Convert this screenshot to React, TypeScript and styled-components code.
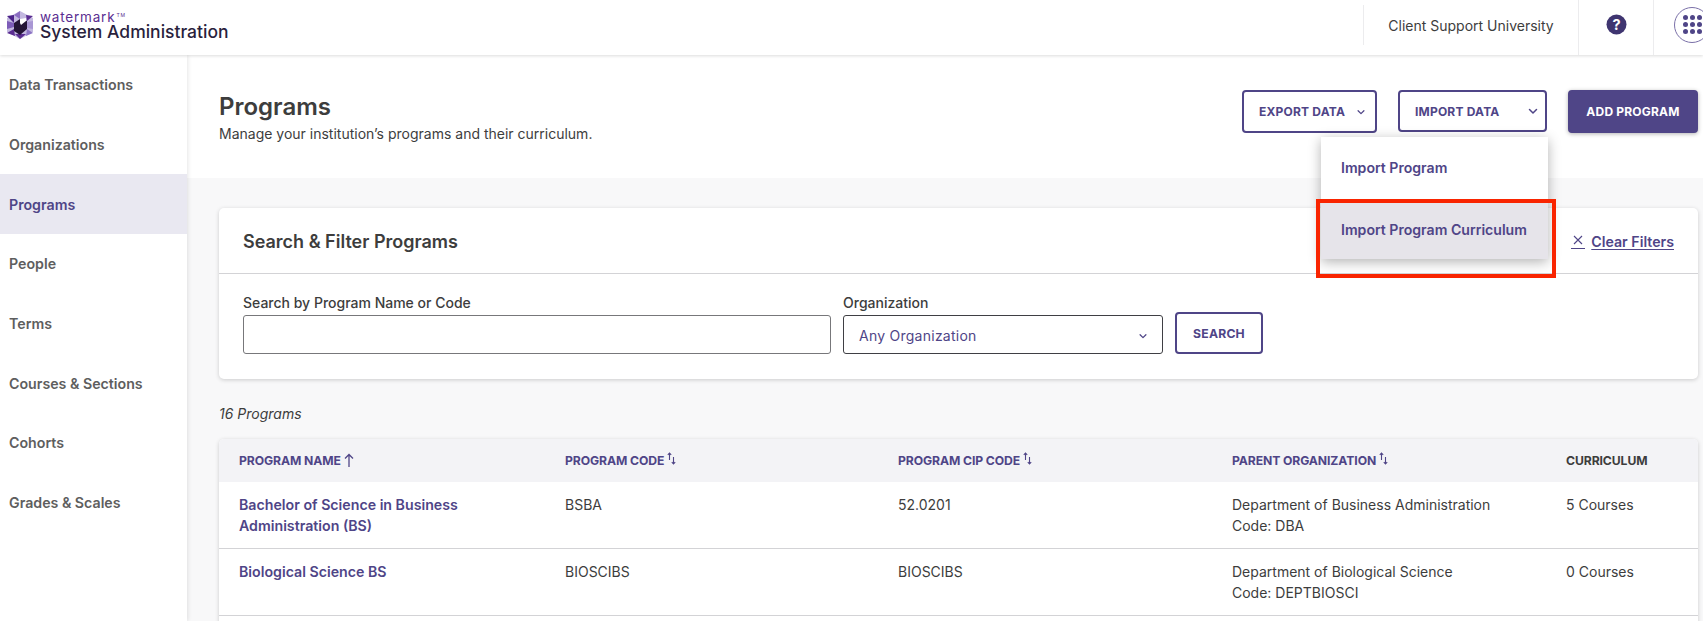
import React from "react";
import styled, { createGlobalStyle } from "styled-components";

const PURPLE = "#4f4587";
const TEXT = "#3d3d3d";

const GlobalStyle = createGlobalStyle`
  html, body {
    margin: 0;
    padding: 0;
    background: #ffffff;
  }
  body {
    font-family: Inter, "Noto Sans", "Liberation Sans", sans-serif;
    color: ${TEXT};
  }
  * {
    box-sizing: border-box;
  }
`;

const Page = styled.div`
  position: relative;
  width: 1703px;
  height: 621px;
  overflow: hidden;
  display: flex;
  flex-direction: column;
  background: #f8f8f9;
`;

const TopBar = styled.header`
  position: relative;
  z-index: 3;
  flex: 0 0 55px;
  display: flex;
  align-items: stretch;
  background: #ffffff;
  box-shadow: 0 1px 3px rgba(0, 0, 0, 0.14);
`;

const Brand = styled.div`
  display: flex;
  align-items: center;
  gap: 7px;
  padding: 0 0 5px 7px;
  flex: 1;
`;

const BrandText = styled.div`
  display: flex;
  flex-direction: column;
`;

const BrandMark = styled.span`
  padding-top: 2px;
  font-size: 13.5px;
  line-height: 12px;
  letter-spacing: 0.8px;
  color: #5a2d91;
  sup {
    font-size: 5px;
    vertical-align: 5px;
    line-height: 0;
    margin-left: 1px;
  }
`;

const BrandTitle = styled.span`
  font-size: 17.5px;
  line-height: 18px;
  font-weight: 500;
  color: #2a1f3d;
`;

const TopCell = styled.div<{ $width: number; $tall?: boolean }>`
  flex: 0 0 ${({ $width }) => $width}px;
  min-width: 0;
  display: flex;
  align-items: center;
  justify-content: center;
  border-left: 1px solid #ececee;
  margin-top: ${({ $tall }) => ($tall ? 0 : 5)}px;
  margin-bottom: ${({ $tall }) => ($tall ? 0 : 10)}px;
  padding-bottom: ${({ $tall }) => ($tall ? 6 : 0)}px;
`;

const SchoolName = styled.span`
  font-size: 14px;
  color: ${TEXT};
`;

const AppsCell = styled(TopCell)`
  justify-content: flex-start;
  padding-left: 20px;
`;

const AppsButton = styled.div`
  flex: 0 0 36px;
  width: 36px;
  height: 36px;
  border: 1px solid #7a70a8;
  border-radius: 50%;
  display: grid;
  grid-template-columns: repeat(3, 5px);
  grid-auto-rows: 5px;
  gap: 2px;
  place-content: center;
`;

const AppsDot = styled.i`
  display: block;
  border-radius: 50%;
  background: ${PURPLE};
`;

const Body = styled.div`
  flex: 1;
  display: flex;
  min-height: 0;
`;

const SideNav = styled.nav`
  position: relative;
  z-index: 2;
  flex: 0 0 187px;
  background: #ffffff;
  box-shadow: 1px 0 4px rgba(0, 0, 0, 0.1);
`;

const NavItem = styled.div<{ $active?: boolean }>`
  height: 59.7px;
  display: flex;
  align-items: center;
  padding-left: 9px;
  font-size: 14.2px;
  font-weight: 600;
  color: ${({ $active }) => ($active ? PURPLE : "#5e5e5e")};
  background: ${({ $active }) => ($active ? "#e9e8f1" : "transparent")};
`;

const Main = styled.main`
  flex: 1;
  min-width: 0;
  display: flex;
  flex-direction: column;
`;

const PageHead = styled.section`
  flex: 0 0 123px;
  background: #ffffff;
  display: flex;
  justify-content: space-between;
  padding: 35px 5px 0 32px;
`;

const PageHeadText = styled.div`
  padding-top: 2px;
`;

const PageTitle = styled.h1`
  margin: 0 0 2px;
  font-size: 24px;
  line-height: 30px;
  font-weight: 600;
  color: ${TEXT};
`;

const PageSub = styled.p`
  margin: 0;
  font-size: 14px;
  line-height: 20px;
  color: ${TEXT};
`;

const Actions = styled.div`
  display: flex;
  gap: 21px;
  align-items: flex-start;
`;

const Button = styled.div<{ $width: number; $height?: number }>`
  width: ${({ $width }) => $width}px;
  height: ${({ $height }) => $height ?? 43}px;
  display: flex;
  align-items: center;
  justify-content: center;
  border: 2px solid ${PURPLE};
  border-radius: 4px;
  font-size: 12px;
  font-weight: 700;
  letter-spacing: 0.2px;
  color: ${PURPLE};
  background: #ffffff;
`;

const MenuButton = styled(Button)<{ $right: number }>`
  justify-content: space-between;
  padding: 0 ${({ $right }) => $right}px 0 15px;
`;

const PrimaryButton = styled(Button)`
  color: #ffffff;
  background: ${PURPLE};
  box-shadow: 0 1px 4px rgba(0, 0, 0, 0.3);
`;

const Content = styled.div`
  flex: 1;
  padding: 30px 5px 0 32px;
  min-height: 0;
`;

const Card = styled.section`
  background: #ffffff;
  border-radius: 5px;
  box-shadow: 0 1px 4px rgba(0, 0, 0, 0.18);
`;

const CardHead = styled.div`
  height: 66px;
  display: flex;
  align-items: center;
  justify-content: space-between;
  padding: 2px 24px 0;
  border-bottom: 1px solid #d3d3d6;
`;

const CardTitle = styled.h2`
  margin: 0;
  font-size: 18px;
  font-weight: 600;
  color: ${TEXT};
`;

const ClearFilters = styled.div`
  display: flex;
  align-items: center;
  gap: 6px;
  font-size: 14.2px;
  font-weight: 600;
  color: ${PURPLE};
  span {
    text-decoration: underline;
    text-underline-offset: 2px;
  }
`;

const ClearIcon = styled.div`
  display: flex;
  border-bottom: 1px solid ${PURPLE};
  padding: 0 1px 2px;
`;

const FilterRow = styled.div`
  display: flex;
  align-items: flex-end;
  gap: 12px;
  padding: 20px 24px 25px;
`;

const Field = styled.label<{ $width: number }>`
  flex: 0 0 ${({ $width }) => $width}px;
  display: flex;
  flex-direction: column;
  gap: 3px;
  font-size: 14px;
  font-weight: 500;
  line-height: 18px;
  color: ${TEXT};
`;

const TextInput = styled.div`
  height: 39px;
  border: 1px solid #77777a;
  border-radius: 3px;
  background: #ffffff;
`;

const SelectBox = styled.div`
  height: 39px;
  border: 1px solid #3f3f44;
  border-radius: 3px;
  background: #ffffff;
  display: flex;
  align-items: center;
  justify-content: space-between;
  padding: 2px 14px 0 15px;
  font-size: 14px;
  font-weight: 400;
  letter-spacing: 0.25px;
  color: ${PURPLE};
`;

const SearchButton = styled(Button)`
  font-size: 12.2px;
`;

const ResultCount = styled.div`
  margin: 26px 0 16px;
  font-size: 14px;
  line-height: 18px;
  font-style: italic;
  color: ${TEXT};
`;

const TableCard = styled(Card)`
  overflow: hidden;
`;

const TableRow = styled.div`
  display: grid;
  grid-template-columns: 326px 333px 334px 334px 1fr;
  padding-left: 20px;
  height: 67px;
  padding-top: 12px;
  border-bottom: 1px solid #d3d3d6;
  font-size: 14px;
  line-height: 21px;
  color: ${TEXT};
`;

const TableHead = styled(TableRow)`
  height: 43px;
  padding-top: 0;
  padding-bottom: 1px;
  align-items: center;
  background: #f3f3f6;
  border-bottom: none;
`;

const HeadCell = styled.div<{ $plain?: boolean }>`
  display: flex;
  align-items: center;
  gap: 3px;
  font-size: 12.2px;
  font-weight: 700;
  letter-spacing: -0.1px;
  color: ${({ $plain }) => ($plain ? TEXT : PURPLE)};
`;

const ProgramLink = styled.div`
  font-size: 14.2px;
  font-weight: 600;
  color: ${PURPLE};
  max-width: 270px;
`;

const Menu = styled.div`
  position: absolute;
  z-index: 4;
  left: 1321px;
  top: 137px;
  width: 227px;
  background: #ffffff;
  box-shadow: 0 3px 12px rgba(0, 0, 0, 0.3);
`;

const MenuItem = styled.div`
  height: 63px;
  display: flex;
  align-items: center;
  padding: 0 0 2px 20px;
  font-size: 14.1px;
  font-weight: 600;
  color: ${PURPLE};
  background: #ffffff;
`;

const MenuItemHover = styled(MenuItem)`
  height: 59px;
  padding-bottom: 0;
  background: #e6e4ea;
`;

const Highlight = styled.div`
  position: absolute;
  z-index: 5;
  left: 1316px;
  top: 199px;
  width: 240px;
  height: 79px;
  border: 4px solid #f92400;
  pointer-events: none;
`;

const LogoIcon = () => (
  <svg width="26" height="28" viewBox="0 0 26 28">
    <polygon points="13,0 26,7 26,21 13,28 0,21 0,7" fill="#c3b8e0" />
    <polygon points="13,0 7,4 13,8" fill="#8a6cc0" />
    <polygon points="0,5 7,4 7,12" fill="#4b2288" />
    <polygon points="26,5 19,4 20,10" fill="#5a2d91" />
    <polygon points="7,12 0,10 0,18 7,16" fill="#7d5cb8" />
    <polygon points="20,11 26,10 26,18 20,17" fill="#a997d4" />
    <polygon points="0,22 7,18 8,25" fill="#5a2d91" />
    <polygon points="26,22 20,18 19,25" fill="#8c74c4" />
    <polygon points="13,28 8,23 19,23" fill="#5a2d91" />
    <polygon points="13,8 20,10 20,18 13,24 7,20 7,12" fill="#241536" />
    <polygon points="13,8 19,7 19,10 14,14 13,12" fill="#ffffff" />
  </svg>
);

const HelpIcon = () => (
  <svg width="21" height="21" viewBox="0 0 21 21">
    <circle cx="10.5" cy="10.5" r="10" fill="#3f3570" />
    <text x="10.5" y="15.5" textAnchor="middle" fontSize="14.5" fontWeight="700" fill="#ffffff" fontFamily="Inter, sans-serif">
      ?
    </text>
  </svg>
);

const Chevron = ({ size = 12, width = 1.5 }: { size?: number; width?: number }) => (
  <svg width={size} height={size} viewBox="0 0 12 12" fill="none">
    <path d="M2.5 4.5 6 8l3.5-3.5" stroke={PURPLE} strokeWidth={width} strokeLinecap="round" strokeLinejoin="round" />
  </svg>
);

const CrossIcon = () => (
  <svg width="12" height="12" viewBox="0 0 12 12" fill="none">
    <path d="M2 2l8 8M10 2l-8 8" stroke={PURPLE} strokeWidth="1.1" />
  </svg>
);

const SortUp = () => (
  <svg width="10" height="15" viewBox="0 0 10 15" fill="none">
    <path d="M5 14V1.5M1 5.5l4-4 4 4" stroke={PURPLE} strokeWidth="1.3" />
  </svg>
);

const SortBoth = () => (
  <svg width="9" height="13" viewBox="0 0 9 13" fill="none" style={{ marginTop: -3 }}>
    <path d="M2.5 8V1M.8 2.8l1.7-1.8 1.7 1.8" stroke={PURPLE} strokeWidth="1.1" />
    <path d="M6.5 5v7M4.8 10.2 6.5 12l1.7-1.8" stroke={PURPLE} strokeWidth="1.1" />
  </svg>
);

const navItems = [
  "Data Transactions",
  "Organizations",
  "Programs",
  "People",
  "Terms",
  "Courses & Sections",
  "Cohorts",
  "Grades & Scales",
];

const programs = [
  {
    name: "Bachelor of Science in Business Administration (BS)",
    code: "BSBA",
    cip: "52.0201",
    org: "Department of Business Administration",
    orgCode: "Code: DBA",
    curriculum: "5 Courses",
  },
  {
    name: "Biological Science BS",
    code: "BIOSCIBS",
    cip: "BIOSCIBS",
    org: "Department of Biological Science",
    orgCode: "Code: DEPTBIOSCI",
    curriculum: "0 Courses",
  },
];

const App: React.FC = () => {
  return (
    <Page>
      <GlobalStyle />
      <TopBar>
        <Brand>
          <LogoIcon />
          <BrandText>
            <BrandMark>
              watermark<sup>TM</sup>
            </BrandMark>
            <BrandTitle>System Administration</BrandTitle>
          </BrandText>
        </Brand>
        <TopCell $width={215}>
          <SchoolName>Client Support University</SchoolName>
        </TopCell>
        <TopCell $width={75} $tall>
          <HelpIcon />
        </TopCell>
        <AppsCell $width={50} $tall>
          <AppsButton>
            {Array.from({ length: 9 }).map((_, i) => (
              <AppsDot key={i} />
            ))}
          </AppsButton>
        </AppsCell>
      </TopBar>
      <Body>
        <SideNav>
          {navItems.map((item) => (
            <NavItem key={item} $active={item === "Programs"}>
              {item}
            </NavItem>
          ))}
        </SideNav>
        <Main>
          <PageHead>
            <PageHeadText>
              <PageTitle>Programs</PageTitle>
              <PageSub>Manage your institution’s programs and their curriculum.</PageSub>
            </PageHeadText>
            <Actions>
              <MenuButton $width={135} $right={9}>
                EXPORT DATA
                <Chevron size={10} />
              </MenuButton>
              <MenuButton $width={149} $height={42} $right={6}>
                IMPORT DATA
                <Chevron />
              </MenuButton>
              <PrimaryButton $width={130}>ADD PROGRAM</PrimaryButton>
            </Actions>
          </PageHead>
          <Content>
            <Card>
              <CardHead>
                <CardTitle>Search &amp; Filter Programs</CardTitle>
                <ClearFilters>
                  <ClearIcon>
                    <CrossIcon />
                  </ClearIcon>
                  <span>Clear Filters</span>
                </ClearFilters>
              </CardHead>
              <FilterRow>
                <Field $width={588}>
                  Search by Program Name or Code
                  <TextInput />
                </Field>
                <Field $width={320}>
                  Organization
                  <SelectBox>
                    Any Organization
                    <Chevron size={10} />
                  </SelectBox>
                </Field>
                <SearchButton $width={88} $height={42}>
                  SEARCH
                </SearchButton>
              </FilterRow>
            </Card>
            <ResultCount>16 Programs</ResultCount>
            <TableCard>
              <TableHead>
                <HeadCell>
                  PROGRAM NAME <SortUp />
                </HeadCell>
                <HeadCell>
                  PROGRAM CODE <SortBoth />
                </HeadCell>
                <HeadCell>
                  PROGRAM CIP CODE <SortBoth />
                </HeadCell>
                <HeadCell>
                  PARENT ORGANIZATION <SortBoth />
                </HeadCell>
                <HeadCell $plain>CURRICULUM</HeadCell>
              </TableHead>
              {programs.map((program) => (
                <TableRow key={program.code}>
                  <ProgramLink>{program.name}</ProgramLink>
                  <div>{program.code}</div>
                  <div>{program.cip}</div>
                  <div>
                    {program.org}
                    <br />
                    {program.orgCode}
                  </div>
                  <div>{program.curriculum}</div>
                </TableRow>
              ))}
              <TableRow />
            </TableCard>
          </Content>
        </Main>
      </Body>
      <Menu>
        <MenuItem>Import Program</MenuItem>
        <MenuItemHover>Import Program Curriculum</MenuItemHover>
      </Menu>
      <Highlight />
    </Page>
  );
};

export default App;
